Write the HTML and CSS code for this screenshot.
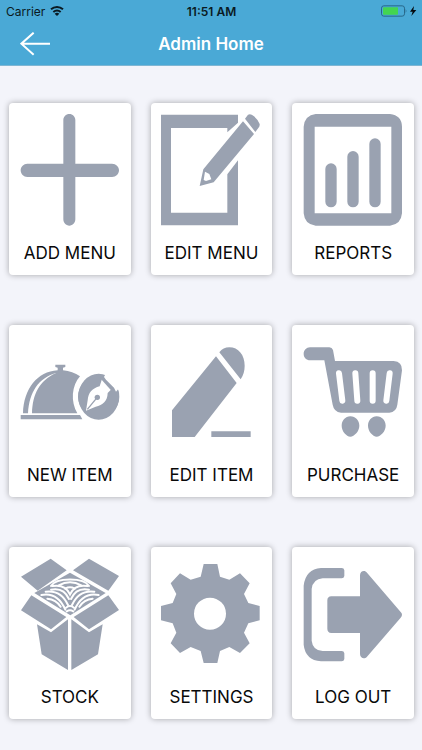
FILE: index.html
```html
<!DOCTYPE html>
<html lang="en">
<head>
<meta charset="utf-8">
<meta name="viewport" content="width=device-width, initial-scale=1">
<title>Admin Home</title>
<link rel="stylesheet" href="styles.css">
</head>
<body>
<header class="header">
  <div class="status">
    <div class="status-left">
      <span>Carrier</span>
      <svg class="wifi" viewBox="0 0 42 30" aria-hidden="true">
        <path d="M3 10a27 27 0 0 1 36 0" fill="none" stroke="currentColor" stroke-width="6"/>
        <path d="M10 18a17 17 0 0 1 22 0" fill="none" stroke="currentColor" stroke-width="6"/>
        <path d="M21 30l-7-7a11 11 0 0 1 14 0z" fill="currentColor"/>
      </svg>
    </div>
    <span class="time">11:51 AM</span>
    <div class="status-right">
      <svg class="battery" viewBox="0 0 108 34" aria-hidden="true">
        <rect x="1.5" y="1.5" width="69" height="31" rx="7" fill="none" stroke="#28688a" stroke-width="3"/>
        <rect x="6" y="6" width="45" height="22" rx="2" fill="#43d551"/>
        <path d="M74 11q5 6 0 12z" fill="#28688a"/>
        <path d="M99 2L87 19h8l-4 13 15-18h-9z" fill="#050a0d"/>
      </svg>
    </div>
  </div>
  <nav class="bar">
    <a class="back" href="#" aria-label="Back">
      <svg class="back-icon" viewBox="60 93 90 72" aria-hidden="true">
        <path d="M101 95L64 128l37 33M64 128h86" fill="none" stroke="currentColor" stroke-width="6"/>
      </svg>
    </a>
    <h1 class="title">Admin Home</h1>
  </nav>
</header>

<main class="grid">
  <a class="card" href="#">
    <svg class="icon" viewBox="60 52 300 342" aria-hidden="true">
      <path d="M208 55c10 0 18 8 18 18v131h110c12 0 21 9 21 20s-9 20-21 20H226v127c0 10-8 19-18 19s-18-9-18-19V244H82c-11 0-20-9-20-20s9-20 20-20h108V73c0-10 8-18 18-18z"/>
    </svg>
    <span class="label">ADD MENU</span>
  </a>
  <a class="card" href="#">
    <svg class="icon" viewBox="63 52 300 342" aria-hidden="true">
      <path fill-rule="evenodd" d="M63 57h231v24l-32 29V97H93v254h169V236l32-42v195H63z"/>
      <path d="M309 77l33 38-121 145-42 11 11-50zM195 228l-4 25 7 3 16-5-6-16z" fill-rule="evenodd"/>
      <path d="M315 69l9-12q8-4 17 4 12 10 18 24 1 8-4 12l-9 12z"/>
    </svg>
    <span class="label">EDIT MENU</span>
  </a>
  <a class="card" href="#">
    <svg class="icon" viewBox="63 52 300 342" aria-hidden="true">
      <path fill-rule="evenodd" d="M101 55h223q35 4 36 38v260q-3 34-36 37H101q-33-3-36-37V93q3-34 36-38zM98 93v260h230V93z"/>
      <path d="M147 220v98M213 183v135M279 145v173" fill="none" stroke="currentColor" stroke-width="34" stroke-linecap="round"/>
    </svg>
    <span class="label">REPORTS</span>
  </a>

  <a class="card" href="#">
    <svg class="icon" viewBox="60 50 300 342" aria-hidden="true">
      <path d="M62 290h178l7 13H62z"/>
      <path d="M69 285c2-73 43-126 104-129v-8l-7-2v-7h30v7l-7 2v8q29 3 51 18c-25 28-29 76-8 111H96c2-58 21-97 72-121-52 15-80 57-84 121z"/>
      <circle cx="296" cy="235" r="62"/>
      <ellipse cx="296" cy="235" rx="61" ry="69"/>
      <path d="M306 182l28 31-11 11c-1 25-14 36-36 41l-29 12 5-31c2-24 14-36 36-42zM312 176l8-16 42 44-14 16-6-12-24-24z" fill="#fff"/>
      <path d="M303 178l35 39" fill="none" stroke="currentColor" stroke-width="6"/>
      <path d="M262 273l29-35" fill="none" stroke="currentColor" stroke-width="4"/>
      <circle cx="292" cy="237" r="8"/>
    </svg>
    <span class="label">NEW ITEM</span>
  </a>
  <a class="card" href="#">
    <svg class="icon" viewBox="63 50 300 342" aria-hidden="true">
      <path d="M228 114l62 80-126 162H96v-80zM238 102c8-10 17-15 30-15 27 0 46 23 46 55 0 16-4 29-12 41zM214 339h118v17H214z"/>
    </svg>
    <span class="label">EDIT ITEM</span>
  </a>
  <a class="card" href="#">
    <svg class="icon" viewBox="63 50 300 342" aria-hidden="true">
      <path d="M84 87h58q8 0 11 8l6 33h176q26 2 25 28l-14 103q-3 22-24 24H177q-21-2-25-24l-25-133H84c-11 0-19-8-19-19s8-20 19-20z"/>
      <path d="M171 165l10 82M220 165l6 82M272 165v82M323 165l-10 82" fill="none" stroke="#fff" stroke-width="18" stroke-linecap="round"/>
      <path d="M205 294c16 0 27 13 27 28 0 17-15 32-27 33-12-1-26-16-26-33 0-15 11-28 26-28zM284 294c16 0 27 13 27 28 0 17-15 32-27 33-12-1-26-16-26-33 0-15 11-28 26-28z"/>
    </svg>
    <span class="label">PURCHASE</span>
  </a>

  <a class="card" href="#">
    <svg class="icon" viewBox="60 51 300 342" aria-hidden="true">
      <path d="M152 56l48 35-87 61-50-42zM267 56l90 52-32 44-106-61zM94 166l105 65-46 37-90-57zM325 166l32 44-90 58-46-37zM111 253l42 24 51-39v152l-79-47zM308 253l-14 90-80 47V238l53 39z"/>
      <path d="M210 98l107 61-106 67-108-67z"/>
      <g fill="none" stroke="#fff" stroke-width="6" stroke-linecap="round">
        <path d="M153 138C168 112 252 112 267 138"/>
        <path d="M176 136q34-18 68 0"/>
        <path d="M196 146q14-8 28 0"/>
        <path d="M153 149q38-8 54 28M267 149q-38-8-54 28"/>
        <path d="M158 138q38-6 52 25q14-31 52-25"/>
        <path d="M124 165q48-10 72 44M296 165q-48-10-72 44"/>
        <path d="M137 155q46-6 67 40M283 155q-46-6-67 40"/>
        <path d="M142 176q26 2 40 24M278 176q-26 2-40 24"/>
        <path d="M198 203q12-10 24 0M200 214q10-6 20 0"/>
      </g>
    </svg>
    <span class="label">STOCK</span>
  </a>
  <a class="card" href="#">
    <svg class="icon" viewBox="63 51 300 342" aria-hidden="true">
      <path fill-rule="evenodd" d="M191 72h41l8 38 28 9 32-19 29 30-17 32 13 27 34 9v43l-34 9-13 28 17 32-29 29-32-18-28 12-8 36h-41l-9-36-30-12-32 18-28-29 17-32-11-28-35-9v-43l35-9 11-27-17-32 28-30 32 19 30-9zM210 173a48 48 0 1 0 0 96 48 48 0 0 0 0-96z"/>
    </svg>
    <span class="label">SETTINGS</span>
  </a>
  <a class="card" href="#">
    <svg class="icon" viewBox="63 51 300 342" aria-hidden="true">
      <path d="M179 84q7 0 8 7v17q-1 7-8 7h-57q-29 2-33 32v155q3 29 33 31h57q7 0 8 7v17q-1 7-8 7h-62q-47-4-52-50V137q6-50 52-53z"/>
      <path d="M148 169h86v-63c0-13 14-17 21-8l101 118q8 8 0 17L255 350c-8 9-21 4-21-8v-63h-86q-12-1-12-13v-85q0-11 12-12z"/>
    </svg>
    <span class="label">LOG OUT</span>
  </a>
</main>
</body>
</html>
```
FILE: styles.css
```css
* {
  box-sizing: border-box;
}

body {
  margin: 0;
  min-height: 100vh;
  background: #f3f4fa;
  color: #090909;
  font-family: Inter, "Liberation Sans", sans-serif;
}

.header {
  background: #4aa9d6;
  border-bottom: 1px solid #7fb6d3;
}

.status {
  display: grid;
  grid-template-columns: 1fr auto 1fr;
  align-items: center;
  height: 22px;
  padding: 0 5px 0 6px;
  font-size: 12px;
  color: #0a1a22;
}

.status-left {
  display: flex;
  align-items: center;
  gap: 5px;
}

.status-right {
  display: flex;
  justify-content: flex-end;
}

.wifi {
  width: 14px;
  height: 10px;
}

.battery {
  width: 36px;
  height: 12px;
}

.time {
  font-weight: 600;
}

.bar {
  display: grid;
  grid-template-columns: 1fr auto 1fr;
  align-items: center;
  height: 43px;
  padding: 0 20px;
  color: #fff;
}

.back {
  display: flex;
  justify-self: start;
  color: inherit;
}

.back-icon {
  width: 30px;
  height: 24px;
}

.title {
  margin: 0;
  font-size: 17px;
  line-height: 20px;
  font-weight: 600;
}

.grid {
  display: grid;
  grid-template-columns: repeat(3, 1fr);
  gap: 50px 20px;
  padding: 37px 8px 30px 9px;
}

.card {
  display: flex;
  flex-direction: column;
  align-items: center;
  gap: 16px;
  padding: 10px 0 11px;
  background: #fff;
  border-radius: 4px;
  box-shadow: 0 0 6px rgba(0, 0, 0, 0.32);
  color: inherit;
  text-decoration: none;
}

.icon {
  width: 100px;
  height: 114px;
  color: #9aa2b1;
  fill: currentColor;
}

.label {
  font-size: 17px;
  line-height: 21px;
}
```
